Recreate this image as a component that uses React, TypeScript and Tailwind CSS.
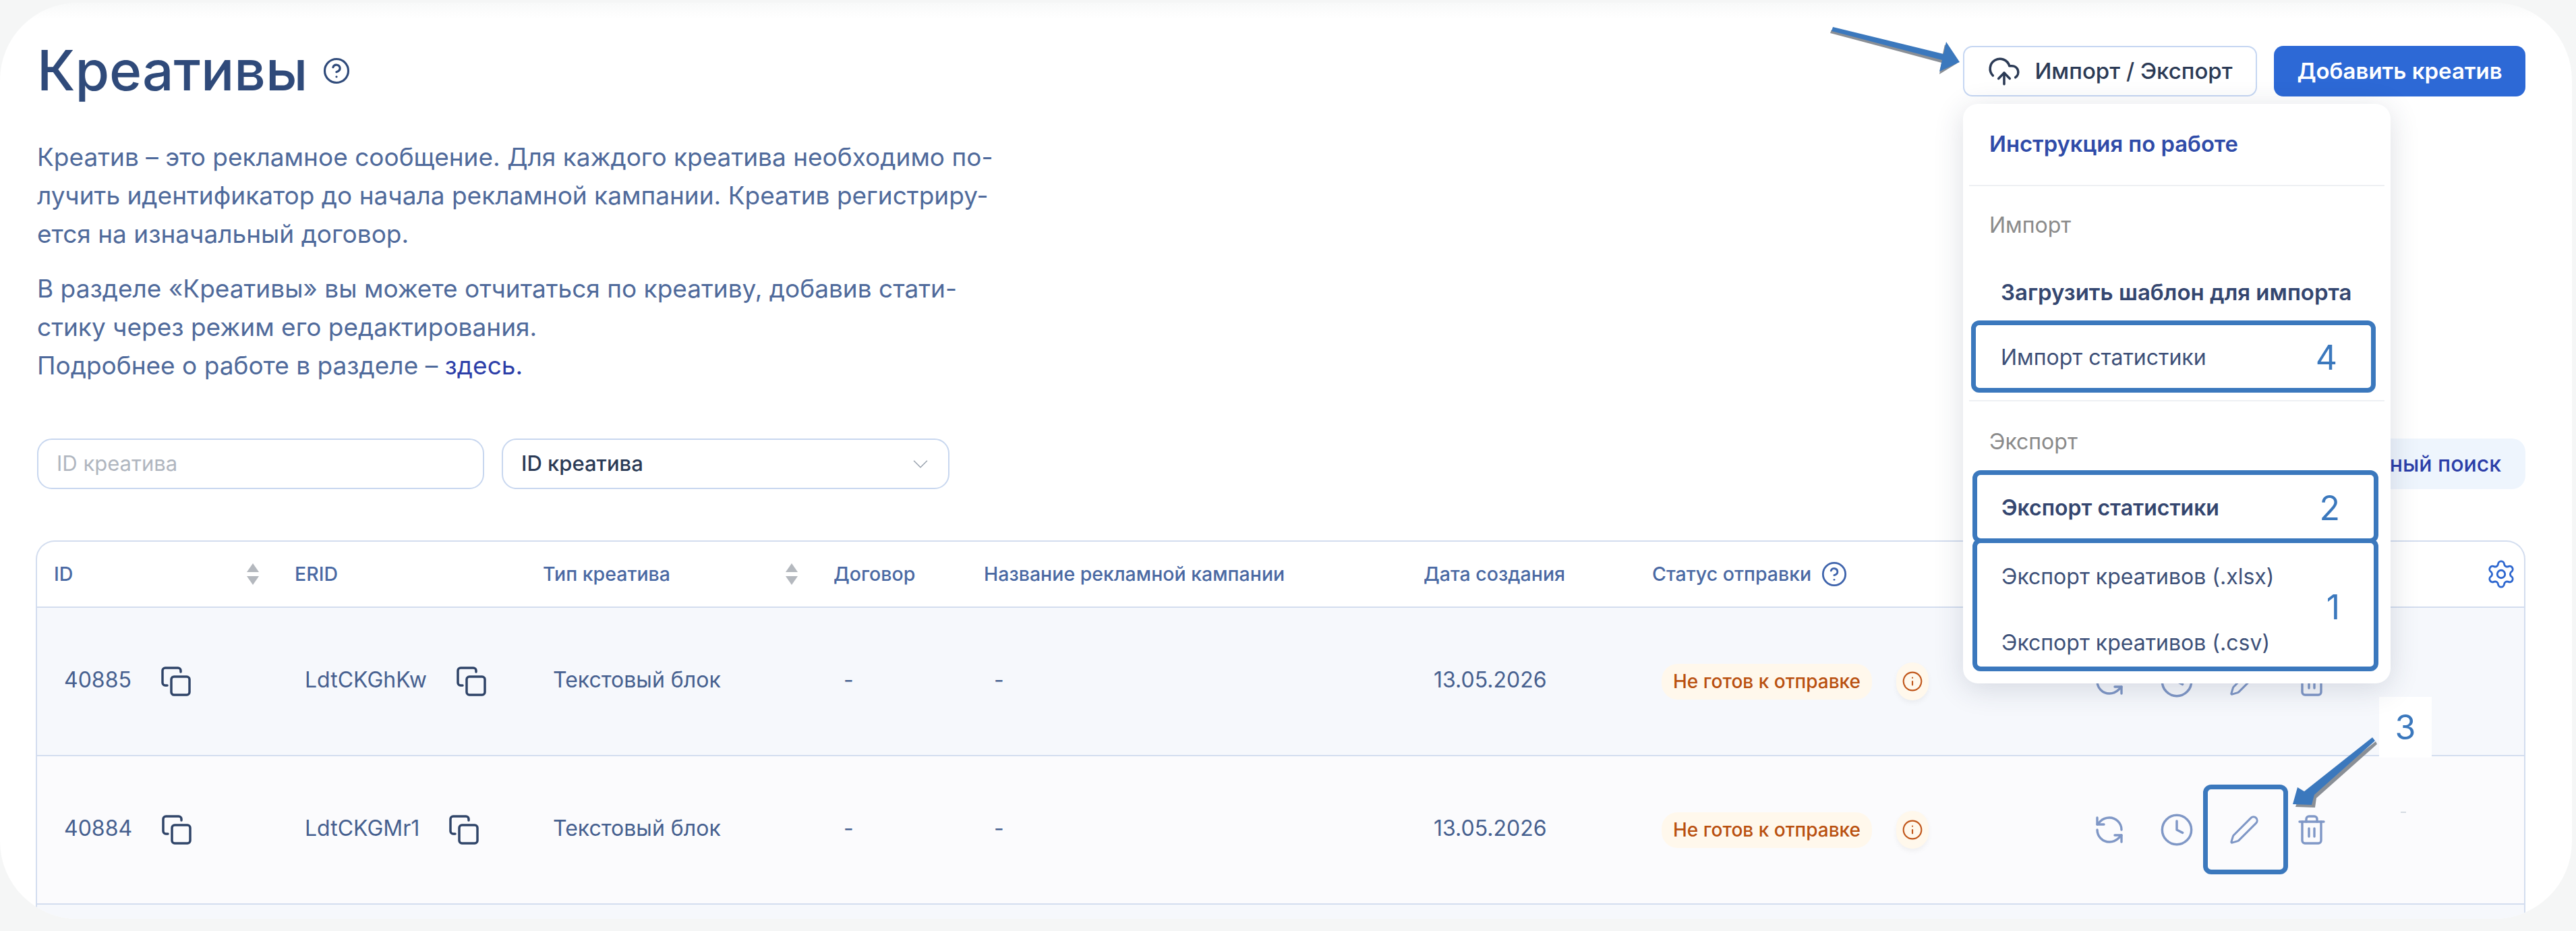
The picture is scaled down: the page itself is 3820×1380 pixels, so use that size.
import { CircleHelp, ChevronDown, Clock, CloudUpload, Info, Pen, RefreshCcw, Settings, Trash2 } from 'lucide-react'

const ROWS = [
  { id: '40885', erid: 'LdtCKGhKw', bg: 'bg-[#f6f8fc]', annotated: false },
  { id: '40884', erid: 'LdtCKGMr1', bg: 'bg-[#fbfbfd]', annotated: true },
]

const GRID = 'grid grid-cols-[357px_368px_431px_223px_652px_339px_673px_1fr]'
const boxCls = 'border-[7px] border-[#3b78bd] rounded-[12px]'
const itemCls = 'text-[32px] text-[#3d5078] whitespace-nowrap'
const numCls = 'text-[50px] font-normal text-[#3b78bd] leading-none'

function CopyIcon() {
  return (
    <svg width="44" height="44" viewBox="0 0 44 44" fill="none" stroke="#2f4468" strokeWidth="3.5" strokeLinecap="round" className="shrink-0 mt-[4px]">
      <path d="M29 8V6a4 4 0 0 0-4-4H6a4 4 0 0 0-4 4v18a4 4 0 0 0 4 4h3" />
      <rect x="15" y="15" width="27" height="27" rx="4" />
    </svg>
  )
}

function SortIcon() {
  return (
    <svg width="22" height="34" viewBox="0 0 22 34" fill="#b4b8be">
      <path d="M11 1l9 13H2z" />
      <path d="M11 33L2 20h18z" />
    </svg>
  )
}

function HeadCell({ children, sort }: { children: React.ReactNode; sort?: boolean }) {
  return (
    <div className="flex items-center justify-between pl-[25px] pr-[26px]">
      <span className="text-[28.5px] font-medium text-[#4a69a3] whitespace-nowrap flex items-center gap-[14px]">{children}</span>
      {sort && <SortIcon />}
    </div>
  )
}

function Row({ id, erid, bg, annotated }: { id: string; erid: string; bg: string; annotated: boolean }) {
  const cell = 'flex items-center pl-[40px] pb-[4px] text-[32px] text-[#46608f] whitespace-nowrap'
  return (
    <div className={`${GRID} ${bg} h-[220px] border-b-2 border-[#d3ddef]`}>
      <div className={`${cell} gap-[44px]`}>{id}<CopyIcon /></div>
      <div className={`${cell} gap-[44px]`}>{erid}<CopyIcon /></div>
      <div className={cell}>Текстовый блок</div>
      <div className={cell}>-</div>
      <div className={cell}>-</div>
      <div className={cell}>13.05.2026</div>
      <div className="flex items-center pl-[39px] gap-[36px]">
        <span className="h-[53px] w-[312px] rounded-[24px] bg-[#fff8ec] text-[28px] font-medium text-[#b9500f] flex items-center justify-center whitespace-nowrap">Не готов к отправке</span>
        <span className="h-[56px] w-[48px] rounded-full bg-[#fff8ec] flex items-center justify-center shadow-[0_4px_6px_rgba(120,120,120,0.08)]">
          <Info size={32} strokeWidth={1.6} className="text-[#c0561a]" />
        </span>
      </div>
      <div className="flex items-center gap-[40px] text-[#7f97c6]">
        <span className="w-[60px] h-[60px] flex items-center justify-center"><RefreshCcw size={48} strokeWidth={1.7} /></span>
        <span className="w-[60px] h-[60px] flex items-center justify-center"><Clock size={52} strokeWidth={1.6} /></span>
        <span className="w-[60px] h-[60px] flex items-center justify-center relative">
          <Pen size={46} strokeWidth={1.6} />
          {annotated && <span className={`absolute top-[-37px] bottom-[-36px] left-[-31px] right-[-35px] ${boxCls}`} />}
        </span>
        <span className="w-[60px] h-[60px] flex items-center justify-center"><Trash2 size={48} strokeWidth={1.7} /></span>
      </div>
    </div>
  )
}

function ImportMenu() {
  return (
    <div className="absolute left-0 top-[86px] z-10 w-[634px] h-[859px] bg-white rounded-[22px] shadow-[0_8px_44px_rgba(40,50,80,0.16)]">
      <div className="h-[120px] pl-[39px] flex items-center text-[32.8px] font-semibold text-[#2f4ba8]">Инструкция по работе</div>
      <div className="h-[2px] mx-[9px] bg-[#eef0f3]" />
      <div className="h-[116px] pl-[39px] flex items-center text-[32px] text-[#8a8a8a]">Импорт</div>
      <div className="h-[83px] pl-[56px] flex items-center text-[33px] font-semibold text-[#34466f]">Загрузить шаблон для импорта</div>
      <div className={`h-[107px] w-[600px] ml-[12px] flex items-center justify-between pl-[37px] pr-[50px] pt-[3px] ${boxCls}`}>
        <span className={itemCls}>Импорт статистики</span>
        <span className={numCls}>4</span>
      </div>
      <div className="h-[2px] mx-[9px] mt-[11px] bg-[#eef0f3]" />
      <div className="h-[102px] pl-[39px] pt-[18px] flex items-center text-[32px] text-[#8a8a8a]">Экспорт</div>
      <div className={`h-[108px] w-[602px] ml-[14px] flex items-center justify-between pl-[36px] pr-[50px] pt-[3px] ${boxCls}`}>
        <span className={`${itemCls} font-semibold text-[#34466f]`}>Экспорт статистики</span>
        <span className={numCls}>2</span>
      </div>
      <div className={`h-[197px] w-[602px] ml-[14px] -mt-[7px] flex flex-col justify-between pl-[36px] pt-[26px] pb-[11px] relative ${boxCls}`}>
        <span className={itemCls}>Экспорт креативов (.xlsx)</span>
        <span className={itemCls}>Экспорт креативов (.csv)</span>
        <span className={`absolute right-[50px] top-[70px] ${numCls}`}>1</span>
      </div>
    </div>
  )
}

export default function App() {
  return (
    <div className="relative w-[3820px] h-[1380px] bg-[#f5f6f6] overflow-hidden pt-[4px] pr-[6px] pb-[18px] font-['Inter',sans-serif]">
      <div className="h-full bg-linear-to-b from-[#f8f9f9] to-white to-[24px] rounded-[115px] overflow-hidden pl-[55px] pr-[69px] pt-[53px]">
        <div className="flex justify-between items-start">
          <h1 className="text-[82px] leading-[96px] font-medium text-[#2f4a7a] flex items-center gap-[22px] whitespace-nowrap">
            Креативы
            <CircleHelp size={42} strokeWidth={1.8} />
          </h1>
          <div className="flex gap-[25px] mt-[11px]">
            <div className="relative">
              <button className="w-[436px] h-[75px] bg-white border-2 border-[#c5d6f2] rounded-[14px] flex items-center justify-center gap-[20px] text-[33px] font-medium text-[#2b3a55] whitespace-nowrap">
                <CloudUpload size={50} strokeWidth={1.7} />
                Импорт / Экспорт
              </button>
              <ImportMenu />
            </div>
            <button className="w-[373px] h-[75px] bg-[#2d69d6] rounded-[14px] text-[33px] font-semibold text-white whitespace-nowrap">Добавить креатив</button>
          </div>
        </div>

        <div className="mt-[51px] text-[37px] leading-[57px] text-[#4f6a9b] whitespace-nowrap">
          <p>Креатив – это рекламное сообщение. Для каждого креатива необходимо по-<br />лучить идентификатор до начала рекламной кампании. Креатив регистриру-<br />ется на изначальный договор.</p>
          <p className="mt-[24px]">В разделе «Креативы» вы можете отчитаться по креативу, добавив стати-<br />стику через режим его редактирования.<br />Подробнее о работе в разделе – <span className="text-[#2c3ea8]">здесь.</span></p>
        </div>

        <div className="mt-[80px] flex items-center h-[75px]">
          <div className="w-[663px] h-full border-2 border-[#c8d7ef] rounded-[22px] flex items-center pl-[27px] text-[31px] text-[#b0b6bf]">ID креатива</div>
          <div className="ml-[26px] w-[664px] h-full border-2 border-[#c8d7ef] rounded-[22px] flex items-center justify-between pl-[27px] pr-[22px] text-[31px] font-medium text-[#2b3a55]">
            ID креатива
            <ChevronDown size={38} strokeWidth={1} className="text-[#9aa3af]" />
          </div>
          <div className="ml-auto w-[420px] h-full rounded-[20px] bg-[#eef5fd] flex items-center justify-end pr-[36px] text-[32px] font-medium text-[#2c3ea8] whitespace-nowrap">Расширенный поиск</div>
        </div>

        <div className="mt-[76px] -ml-[2px] border-2 border-b-0 border-[#d3ddef] rounded-t-[28px] overflow-hidden">
          <div className={`${GRID} h-[98px] border-b-2 border-[#d3ddef]`}>
            <HeadCell sort>ID</HeadCell>
            <HeadCell>ERID</HeadCell>
            <HeadCell sort>Тип креатива</HeadCell>
            <HeadCell>Договор</HeadCell>
            <HeadCell>Название рекламной кампании</HeadCell>
            <HeadCell>Дата создания</HeadCell>
            <HeadCell>Статус отправки <CircleHelp size={40} strokeWidth={1.7} className="text-[#3f64ac]" /></HeadCell>
            <div className="flex items-center justify-end pr-[11px]">
              <Settings size={46} strokeWidth={1.5} className="text-[#2e67cf]" />
            </div>
          </div>
          {ROWS.map(r => <Row key={r.id} {...r} />)}
          <div className="h-[40px] bg-[#f6f8fc]" />
        </div>
      </div>

      {/* annotation arrows and the "3" label lie over the page */}
      <svg className="absolute left-[2710px] top-[34px]" width="200" height="80" viewBox="0 0 200 80">
        <path d="M8 8L172 48L176 30L194 58L168 74L171 57L6 13z" fill="#8a8f96" transform="translate(-2 2)" />
        <path d="M8 6L172 46L176 28L196 58L166 72L170 55L6 12z" fill="#3b78bd" />
      </svg>
      <div className="absolute left-[3528px] top-[1033px] w-[78px] h-[90px] bg-white flex items-center justify-center">
        <span className={numCls}>3</span>
      </div>
      <svg className="absolute left-[3395px] top-[1090px]" width="130" height="110" viewBox="0 0 130 110">
        <path d="M125 6L127 10L37 90L35 104L6 103L14 79L24 85z" fill="#8a8f96" transform="translate(3 3)" />
        <path d="M123 3L127 8L37 88L33 103L5 102L12 77L22 83z" fill="#3b78bd" />
      </svg>
      <span className="absolute left-[3560px] top-[1203px] w-[8px] h-[2px] bg-[#d5dae2]" />
    </div>
  )
}
